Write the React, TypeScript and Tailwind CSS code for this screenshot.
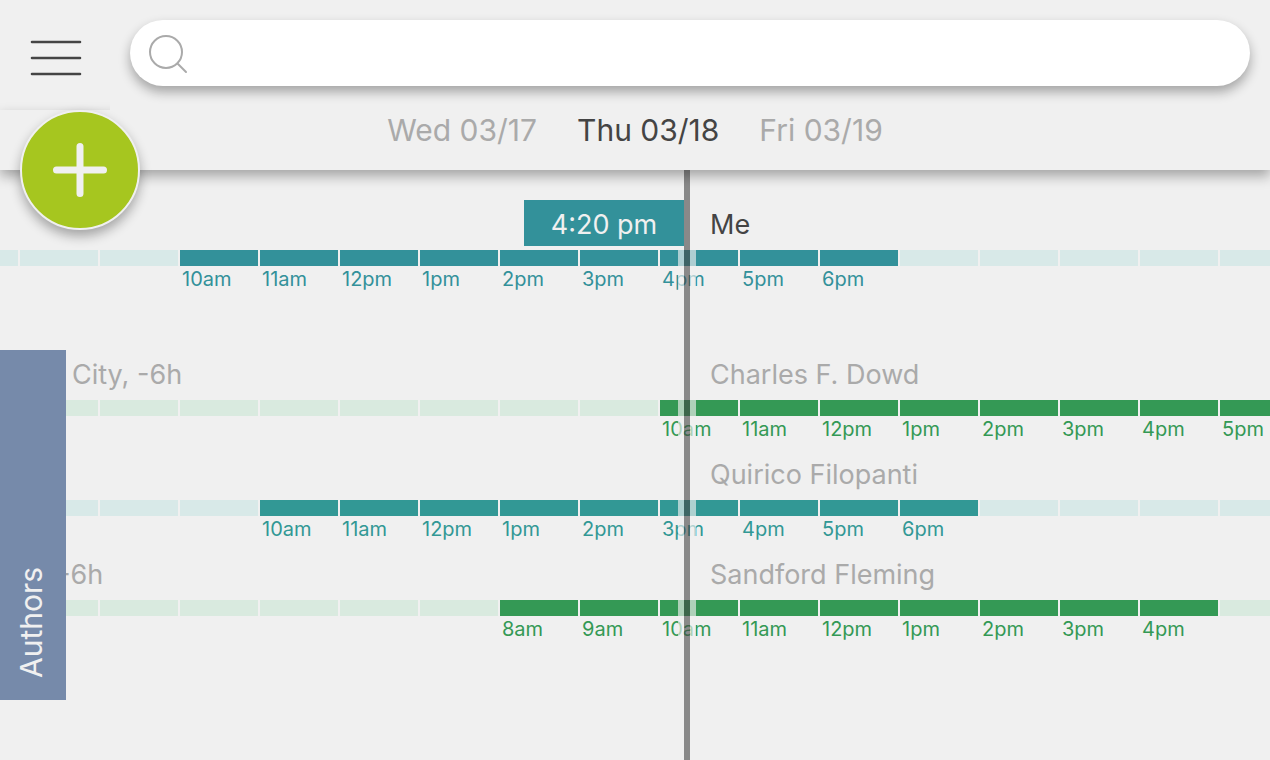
type Row = {
  name: string
  place?: string
  placeClass?: string
  // one entry per hour slot, left to right; empty string = outside working hours
  hours: string[]
  on: string
  off: string
  text: string
}

const TEAL = { on: 'bg-[#33919a]', off: 'bg-[#d8e9e8]', text: 'text-[#33919a]' }
const SEA = { on: 'bg-[#329895]', off: 'bg-[#d8e9e8]', text: 'text-[#329895]' }
const GREEN = { on: 'bg-[#349955]', off: 'bg-[#d9eadf]', text: 'text-[#349955]' }

const me: Row = {
  name: 'Me',
  hours: ['', '', '10am', '11am', '12pm', '1pm', '2pm', '3pm', '4pm', '5pm', '6pm', '', '', '', '', ''],
  ...TEAL,
}

const authors: Row[] = [
  {
    name: 'Charles F. Dowd',
    place: 'City, -6h',
    placeClass: 'ml-1.5',
    hours: ['', '', '', '', '', '', '', '10am', '11am', '12pm', '1pm', '2pm', '3pm', '4pm', '5pm'],
    ...GREEN,
  },
  {
    name: 'Quirico Filopanti',
    hours: ['', '', '10am', '11am', '12pm', '1pm', '2pm', '3pm', '4pm', '5pm', '6pm', '', '', '', ''],
    ...SEA,
  },
  {
    name: 'Sandford Fleming',
    place: '-6h',
    placeClass: '-ml-2',
    hours: ['', '', '', '', '', '8am', '9am', '10am', '11am', '12pm', '1pm', '2pm', '3pm', '4pm', ''],
    ...GREEN,
  },
]

const dates = ['Wed 03/17', 'Thu 03/18', 'Fri 03/19']

// `lead` is the width of the cut-off first slot
function Hours({ row, lead }: { row: Row; lead: string }) {
  return (
    <div className="flex h-[50px] overflow-hidden">
      <div className={`h-4 shrink-0 border-r-2 border-[#f0f0f0] ${lead} ${row.off}`} />
      {row.hours.map((h, i) => (
        <div key={i} className="w-20 shrink-0">
          <div className={`h-4 border-r-2 border-[#f0f0f0] ${h ? row.on : row.off}`} />
          <div className={`pl-0.5 text-[20px] leading-[26px] ${row.text}`}>{h}</div>
        </div>
      ))}
    </div>
  )
}

function Header() {
  return (
    <header className="relative z-20">
      <div className="flex h-[110px]">
        <button aria-label="Menu" className="flex w-[110px] shrink-0 items-center justify-center">
          <svg width="56" height="48" viewBox="0 0 56 48" fill="none" stroke="#444" strokeWidth="2.6" strokeLinecap="round">
            <path d="M5 11H53M5 27H53M5 43H53" />
          </svg>
        </button>
        <form role="search" className="relative z-10 flex-1 bg-[#f0f0f0] p-5">
          <label className="flex h-[66px] items-center rounded-full bg-white pl-4 pr-6 shadow-[0_6px_12px_rgba(0,0,0,0.32)]">
            <svg width="44" height="44" viewBox="0 0 44 44" fill="none" stroke="#aaa" strokeWidth="2" strokeLinecap="round">
              <circle cx="20" cy="21" r="16" />
              <path d="M32 33L40 41" />
            </svg>
            <input type="text" aria-label="Search" className="ml-3 flex-1 bg-transparent text-[27px] text-[#444] outline-none" />
          </label>
        </form>
      </div>
      <nav className="flex h-[60px] justify-center gap-10 bg-[#f0f0f0] pb-5 shadow-[0_6px_12px_rgba(0,0,0,0.32)]">
        {dates.map((d, i) => (
          <button key={d} className={`text-[30px] leading-10 ${i === 1 ? 'text-[#444]' : 'text-[#aaa]'}`}>{d}</button>
        ))}
      </nav>
      <button
        aria-label="Add"
        className="absolute left-5 top-[110px] z-20 flex size-[120px] items-center justify-center rounded-full border-2 border-[#f0f0f0] bg-[#a6c61f] shadow-[0_6px_12px_rgba(0,0,0,0.32)]"
      >
        <svg width="60" height="60" viewBox="0 0 60 60" fill="none" stroke="#f0f0f0" strokeWidth="7" strokeLinecap="round">
          <path d="M30 6.500V53.500M6.500 30H53.500" />
        </svg>
      </button>
    </header>
  )
}

export default function App() {
  return (
    <div className="flex min-h-screen flex-col overflow-hidden bg-[#f0f0f0] font-['Inter',sans-serif]">
      <Header />
      <main className="relative flex-1 pb-[60px] pt-[30px]">
        <section>
          <div className="flex h-[50px] text-[27px] leading-[50px]">
            <div className="flex w-[684px] shrink-0 justify-end">
              <time className="relative z-10 h-[46px] w-40 bg-[#33919a] text-center text-[#f0f0f0]">4:20 pm</time>
            </div>
            <h2 className="pl-[26px] text-[#444]">{me.name}</h2>
          </div>
          <Hours row={me} lead="w-5" />
        </section>

        <section className="mt-[50px] flex">
          <h2 className="h-[350px] w-[66px] shrink-0 rotate-180 bg-[#768aaa] pl-1 pt-[22px] text-[30px] leading-[62px] text-[#f0f0f0] [writing-mode:vertical-rl]">
            Authors
          </h2>
          <div className="min-w-0 flex-1 overflow-hidden">
            {authors.map((row) => (
              <div key={row.name}>
                <div className="flex h-[50px] text-[27px] leading-[50px] text-[#aaa]">
                  <div className="w-[618px] shrink-0">
                    <div className={row.placeClass}>{row.place}</div>
                  </div>
                  <h3 className="pl-[26px]">{row.name}</h3>
                </div>
                <Hours row={row} lead="w-[34px]" />
              </div>
            ))}
          </div>
        </section>

        {/* current time marker */}
        <div className="pointer-events-none absolute inset-y-0 left-[678px] w-[18px] border-x-[6px] border-[#f0f0f0]/65 bg-[#444]/60 bg-clip-padding" />
      </main>
    </div>
  )
}
